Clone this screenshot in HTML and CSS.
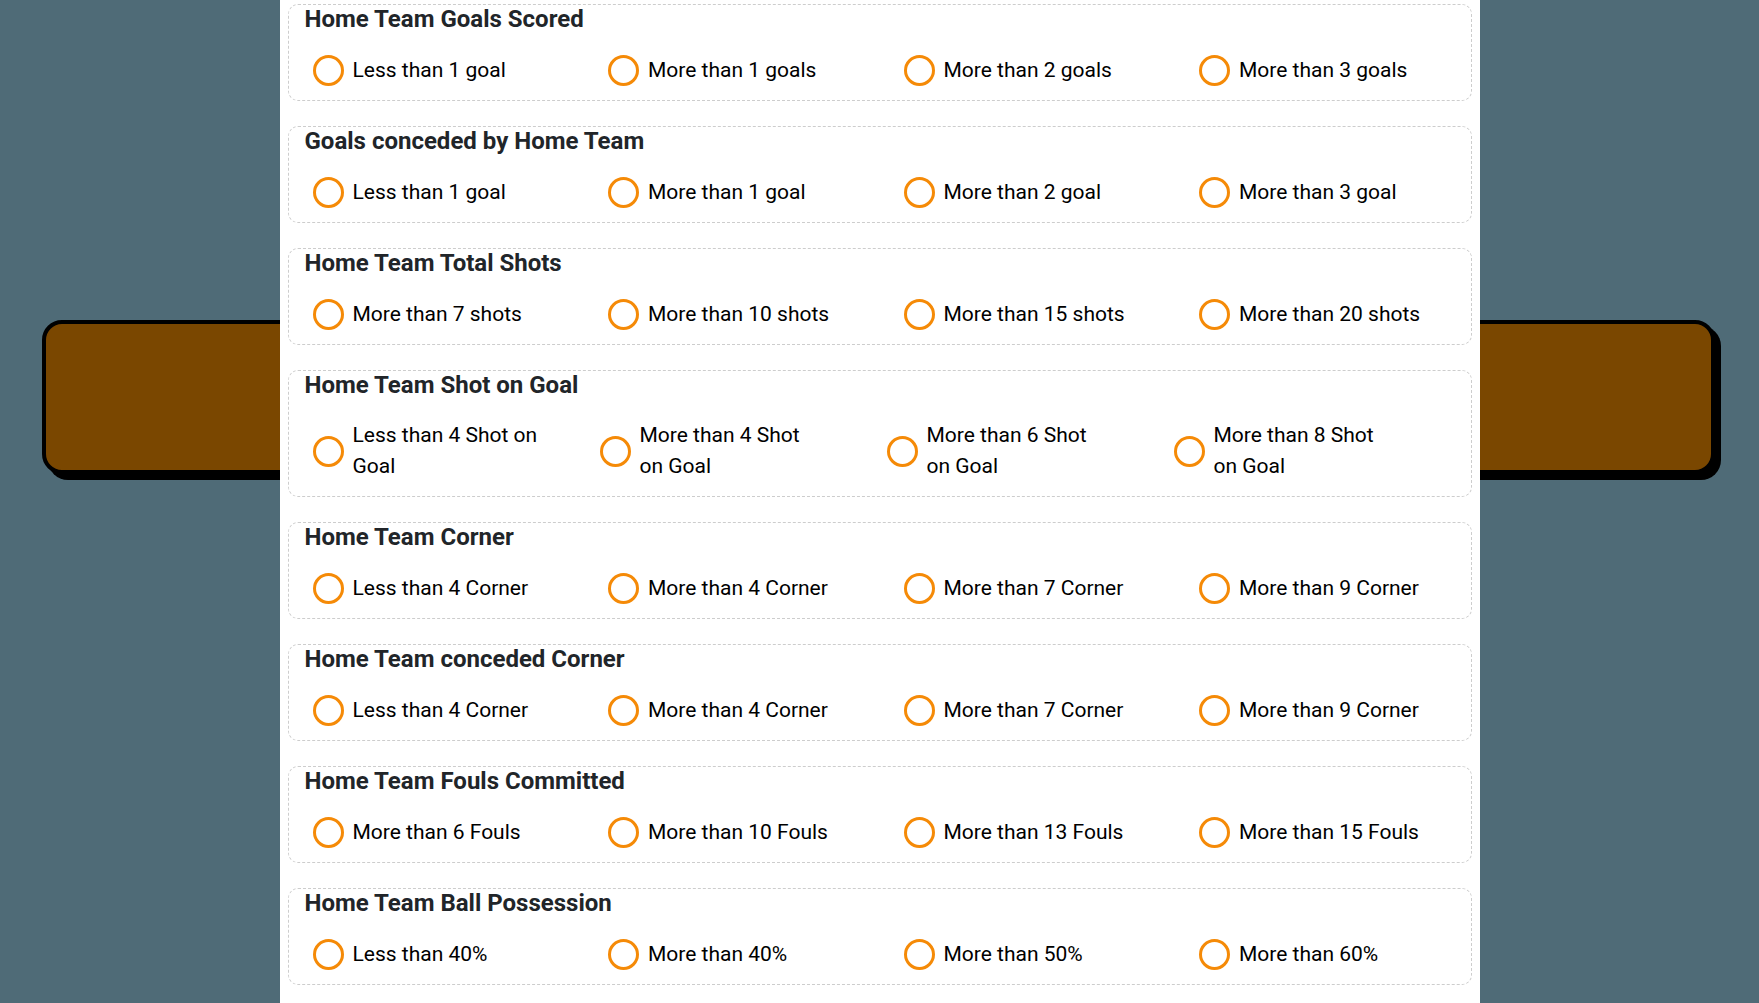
FILE: index.html
```html
<!DOCTYPE html>
<html lang="en">
<head>
    <meta charset="UTF-8">
    <meta name="viewport" content="width=device-width, initial-scale=1.0">
    <title>Home Team Predictions</title>
    <link rel="stylesheet" href="styles.css">
</head>
<body>
    <div class="page">
        <div class="banner"></div>

        <main class="sheet">
            <section class="question">
                <h3 class="question-title">Home Team Goals Scored</h3>
                <div class="choices">
                    <label class="choice"><input type="radio" name="goals"><span>Less than 1 goal</span></label>
                    <label class="choice"><input type="radio" name="goals"><span>More than 1 goals</span></label>
                    <label class="choice"><input type="radio" name="goals"><span>More than 2 goals</span></label>
                    <label class="choice"><input type="radio" name="goals"><span>More than 3 goals</span></label>
                </div>
            </section>

            <section class="question">
                <h3 class="question-title">Goals conceded by Home Team</h3>
                <div class="choices">
                    <label class="choice"><input type="radio" name="conceded"><span>Less than 1 goal</span></label>
                    <label class="choice"><input type="radio" name="conceded"><span>More than 1 goal</span></label>
                    <label class="choice"><input type="radio" name="conceded"><span>More than 2 goal</span></label>
                    <label class="choice"><input type="radio" name="conceded"><span>More than 3 goal</span></label>
                </div>
            </section>

            <section class="question">
                <h3 class="question-title">Home Team Total Shots</h3>
                <div class="choices">
                    <label class="choice"><input type="radio" name="shots"><span>More than 7 shots</span></label>
                    <label class="choice"><input type="radio" name="shots"><span>More than 10 shots</span></label>
                    <label class="choice"><input type="radio" name="shots"><span>More than 15 shots</span></label>
                    <label class="choice"><input type="radio" name="shots"><span>More than 20 shots</span></label>
                </div>
            </section>

            <section class="question">
                <h3 class="question-title">Home Team Shot on Goal</h3>
                <div class="choices choices-narrow">
                    <label class="choice"><input type="radio" name="on-goal"><span>Less than 4 Shot on Goal</span></label>
                    <label class="choice"><input type="radio" name="on-goal"><span>More than 4 Shot on Goal</span></label>
                    <label class="choice"><input type="radio" name="on-goal"><span>More than 6 Shot on Goal</span></label>
                    <label class="choice"><input type="radio" name="on-goal"><span>More than 8 Shot on Goal</span></label>
                </div>
            </section>

            <section class="question">
                <h3 class="question-title">Home Team Corner</h3>
                <div class="choices">
                    <label class="choice"><input type="radio" name="corner"><span>Less than 4 Corner</span></label>
                    <label class="choice"><input type="radio" name="corner"><span>More than 4 Corner</span></label>
                    <label class="choice"><input type="radio" name="corner"><span>More than 7 Corner</span></label>
                    <label class="choice"><input type="radio" name="corner"><span>More than 9 Corner</span></label>
                </div>
            </section>

            <section class="question">
                <h3 class="question-title">Home Team conceded Corner</h3>
                <div class="choices">
                    <label class="choice"><input type="radio" name="corner-against"><span>Less than 4 Corner</span></label>
                    <label class="choice"><input type="radio" name="corner-against"><span>More than 4 Corner</span></label>
                    <label class="choice"><input type="radio" name="corner-against"><span>More than 7 Corner</span></label>
                    <label class="choice"><input type="radio" name="corner-against"><span>More than 9 Corner</span></label>
                </div>
            </section>

            <section class="question">
                <h3 class="question-title">Home Team Fouls Committed</h3>
                <div class="choices">
                    <label class="choice"><input type="radio" name="fouls"><span>More than 6 Fouls</span></label>
                    <label class="choice"><input type="radio" name="fouls"><span>More than 10 Fouls</span></label>
                    <label class="choice"><input type="radio" name="fouls"><span>More than 13 Fouls</span></label>
                    <label class="choice"><input type="radio" name="fouls"><span>More than 15 Fouls</span></label>
                </div>
            </section>

            <section class="question">
                <h3 class="question-title">Home Team Ball Possession</h3>
                <div class="choices">
                    <label class="choice"><input type="radio" name="possession"><span>Less than 40%</span></label>
                    <label class="choice"><input type="radio" name="possession"><span>More than 40%</span></label>
                    <label class="choice"><input type="radio" name="possession"><span>More than 50%</span></label>
                    <label class="choice"><input type="radio" name="possession"><span>More than 60%</span></label>
                </div>
            </section>
        </main>
    </div>
</body>
</html>
```

FILE: styles.css
```css
body {
    margin: 0;
    background-color: #4f6b77;
    font-family: Roboto, "Liberation Sans", Arial, sans-serif;
}

.page {
    position: relative;
    min-height: 100vh;
}

/* brown strip sitting behind the white sheet */
.banner {
    position: absolute;
    left: 42px;
    top: 320px;
    width: 1673px;
    height: 154px;
    box-sizing: border-box;
    background: #7a4700;
    border: 4px solid #000;
    border-radius: 20px;
    box-shadow: 6px 6px 0 #000;
}

.sheet {
    position: relative;
    box-sizing: border-box;
    width: 1200px;
    min-height: 100vh;
    margin: 0 auto;
    padding: 4px 8px 1px;
    background: #fff;
}

.question {
    margin-bottom: 25px;
    padding-bottom: 14px;
    border: 1px dashed #cdcdcd;
    border-radius: 10px;
}

.question-title {
    margin: 0 0 20px;
    padding-left: 16px;
    font-size: 24px;
    line-height: 29px;
    font-weight: 700;
    color: #212529;
}

.choices {
    display: grid;
    grid-template-columns: repeat(4, 1fr);
}

.choices-narrow {
    grid-template-columns: repeat(4, 287px);
}

.choices-narrow .choice span {
    width: 187px;
}

.choice {
    display: flex;
    align-items: center;
    gap: 9px;
    padding-left: 24px;
    font-size: 21px;
    line-height: 31px;
    color: #000;
    cursor: pointer;
}

.choice input {
    appearance: none;
    -webkit-appearance: none;
    flex: none;
    width: 31px;
    height: 31px;
    margin: 1px 0 0;
    border: 3px solid #f58a07;
    border-radius: 50%;
    background: #fff;
}
```
